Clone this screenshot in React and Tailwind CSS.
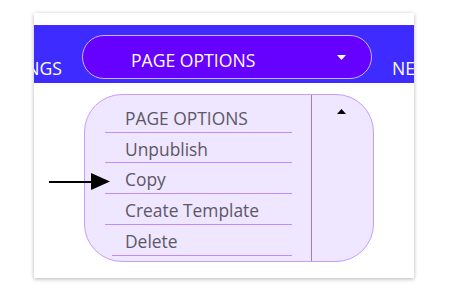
import { useState } from 'react';

const items = ['PAGE OPTIONS', 'Unpublish', 'Copy', 'Create Template', 'Delete'];

function Caret({ up = false, className = '' }) {
  return (
    <svg width="9" height="5" viewBox="0 0 9 5" className={className}>
      <polygon points={up ? '0,5 9,5 4.5,0' : '0,0 9,0 4.5,5'} fill="currentColor" />
    </svg>
  );
}

export default function App() {
  const [open] = useState(true);
  return (
    <div className="w-[450px] h-[300px] bg-white pt-[13px] pl-[34px]" style={{ fontFamily: '"Open Sans", "Noto Sans", sans-serif' }}>
      <div className="relative w-[380px] h-[265px] bg-white pt-[12px] shadow-[0_1px_4px_rgba(0,0,0,0.3)]">
        <div className="flex items-start h-[58px] bg-[#3d2bff] pt-[10px] overflow-hidden text-white text-[17.6px] leading-[24px]">
          <div className="w-[48px] shrink-0 flex justify-end pr-5 mt-[21px] whitespace-nowrap">SETTINGS</div>
          <button className="w-[290px] h-[44px] shrink-0 flex items-center rounded-full border border-[#c8b6f6] bg-[#6600ff] pl-[48px] pr-[25px]">
            <span className="mt-[5px]">PAGE OPTIONS</span>
            <Caret className="ml-auto text-white" />
          </button>
          <div className="ml-5 shrink-0 mt-[21px] whitespace-nowrap">NEW PAGE</div>
        </div>

        {open && (
          <div className="ml-[50px] mt-[11px] w-[290px] h-[168px] flex rounded-[38px] border border-[#c49dff] bg-[#efe6ff] overflow-hidden">
            <div className="w-[227px] shrink-0 border-r border-r-[#a870ff] pt-[7px] pl-[20px] pr-[19px]">
              {items.map((item, i) => (
                <div
                  key={item}
                  className={`border-b border-[#c08cff] pt-[3px] leading-[26.7px] text-[17.4px] text-[#5d5865] ${i === items.length - 1 ? 'ml-[7px] pl-[13px]' : 'pl-[20px]'}`}
                >
                  {item}
                </div>
              ))}
            </div>
            <div className="flex-1 flex justify-center pt-[14px] pr-[2px]">
              <Caret up className="text-black" />
            </div>
          </div>
        )}

        <div className="absolute left-[15px] top-[160px] flex items-center">
          <div className="w-[44px] h-[2px] bg-black" />
          <svg width="19" height="17" viewBox="0 0 19 17" className="-ml-[2px]">
            <polygon points="0,0 19,8.5 0,17" fill="black" />
          </svg>
        </div>
      </div>
    </div>
  );
}
